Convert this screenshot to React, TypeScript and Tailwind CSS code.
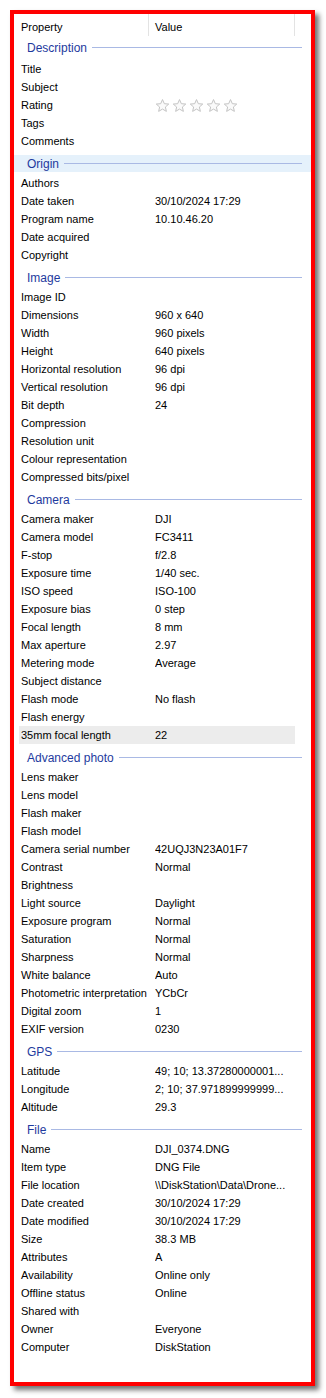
import React from 'react';

type Row = [string, string?];

interface Section {
  title: string;
  rows: Row[];
}

const sections: Section[] = [
  {
    title: 'Description',
    rows: [['Title'], ['Subject'], ['Rating', '*'], ['Tags'], ['Comments']],
  },
  {
    title: 'Origin',
    rows: [
      ['Authors'],
      ['Date taken', '30/10/2024 17:29'],
      ['Program name', '10.10.46.20'],
      ['Date acquired'],
      ['Copyright'],
    ],
  },
  {
    title: 'Image',
    rows: [
      ['Image ID'],
      ['Dimensions', '960 x 640'],
      ['Width', '960 pixels'],
      ['Height', '640 pixels'],
      ['Horizontal resolution', '96 dpi'],
      ['Vertical resolution', '96 dpi'],
      ['Bit depth', '24'],
      ['Compression'],
      ['Resolution unit'],
      ['Colour representation'],
      ['Compressed bits/pixel'],
    ],
  },
  {
    title: 'Camera',
    rows: [
      ['Camera maker', 'DJI'],
      ['Camera model', 'FC3411'],
      ['F-stop', 'f/2.8'],
      ['Exposure time', '1/40 sec.'],
      ['ISO speed', 'ISO-100'],
      ['Exposure bias', '0 step'],
      ['Focal length', '8 mm'],
      ['Max aperture', '2.97'],
      ['Metering mode', 'Average'],
      ['Subject distance'],
      ['Flash mode', 'No flash'],
      ['Flash energy'],
      ['35mm focal length', '22'],
    ],
  },
  {
    title: 'Advanced photo',
    rows: [
      ['Lens maker'],
      ['Lens model'],
      ['Flash maker'],
      ['Flash model'],
      ['Camera serial number', '42UQJ3N23A01F7'],
      ['Contrast', 'Normal'],
      ['Brightness'],
      ['Light source', 'Daylight'],
      ['Exposure program', 'Normal'],
      ['Saturation', 'Normal'],
      ['Sharpness', 'Normal'],
      ['White balance', 'Auto'],
      ['Photometric interpretation', 'YCbCr'],
      ['Digital zoom', '1'],
      ['EXIF version', '0230'],
    ],
  },
  {
    title: 'GPS',
    rows: [
      ['Latitude', '49; 10; 13.37280000001...'],
      ['Longitude', '2; 10; 37.971899999999...'],
      ['Altitude', '29.3'],
    ],
  },
  {
    title: 'File',
    rows: [
      ['Name', 'DJI_0374.DNG'],
      ['Item type', 'DNG File'],
      ['File location', '\\\\DiskStation\\Data\\Drone...'],
      ['Date created', '30/10/2024 17:29'],
      ['Date modified', '30/10/2024 17:29'],
      ['Size', '38.3 MB'],
      ['Attributes', 'A'],
      ['Availability', 'Online only'],
      ['Offline status', 'Online'],
      ['Shared with'],
      ['Owner', 'Everyone'],
      ['Computer', 'DiskStation'],
    ],
  },
];

function Star() {
  return (
    <svg width="15" height="15" viewBox="0 0 24 24">
      <path
        d="M12 2.5l2.9 6.6 7.1.6-5.4 4.7 1.6 7-6.2-3.7-6.2 3.7 1.6-7L2 9.7l7.1-.6z"
        fill="#fafafa"
        stroke="#c4c4c4"
        strokeWidth="1.6"
        strokeLinejoin="round"
      />
    </svg>
  );
}

function PropRow({ row }: { row: Row }) {
  const [name, value] = row;
  const selected = name === '35mm focal length';
  return (
    <div className={`flex h-[18px] items-center mr-[11px] ${selected ? 'bg-[#ececec]' : ''}`}>
      <div className="w-[136px] pl-[2px] whitespace-nowrap">{name}</div>
      <div className="flex-1 whitespace-nowrap overflow-hidden">
        {value === '*' ? (
          <div className="flex gap-[2px] pt-[1px]">
            <Star />
            <Star />
            <Star />
            <Star />
            <Star />
          </div>
        ) : (
          value
        )}
      </div>
    </div>
  );
}

function SectionHeader({ title, active, first }: { title: string; active: boolean; first: boolean }) {
  return (
    <div className={`h-[24px] -ml-[5px] -mr-[5px] ${first ? 'pt-[3px] pb-[4px]' : 'pt-[5px] pb-[2px]'}`}>
      <div className={`h-[17px] flex items-center gap-[5px] pl-[13px] pr-[9px] ${active ? 'bg-[#e5f1fb]' : ''}`}>
        <span className="text-[#1e3a9e] text-[12px]">{title}</span>
        <div className="flex-1 h-px bg-[#a9b9e4]" />
      </div>
    </div>
  );
}

export default function App() {
  return (
    <div className="w-[326px] h-[1398px] bg-white pl-[10px] pt-[10px]">
      <div
        className="w-[305px] h-[1376px] border-4 border-[#ff0000] bg-white shadow-[4px_4px_5px_rgba(0,0,0,0.55)] text-[11px] text-black pl-[5px] pr-[5px]"
        style={{ fontFamily: '"Liberation Sans", Arial, sans-serif' }}
      >
        <div className="flex h-[22px]">
          <div className="w-[130px] pl-[2px] pt-[5px] h-full border-r border-[#e3e3e3]">Property</div>
          <div className="w-[146px] pl-[6px] pt-[5px] h-full border-r border-[#e3e3e3]">Value</div>
        </div>
        {sections.map((s, i) => (
          <div key={s.title}>
            <SectionHeader title={s.title} active={s.title === 'Origin'} first={i === 0} />
            {s.rows.map((r) => (
              <PropRow key={r[0]} row={r} />
            ))}
          </div>
        ))}
      </div>
    </div>
  );
}
